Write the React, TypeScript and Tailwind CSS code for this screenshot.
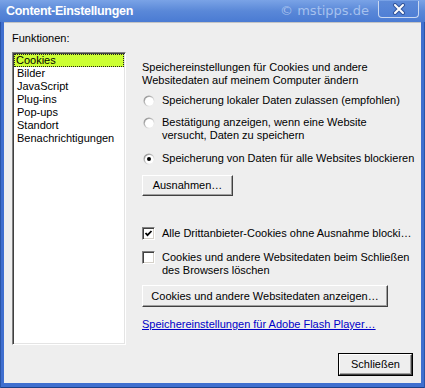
const raised =
  "border border-t-white border-l-white border-r-[#404040] border-b-[#404040] shadow-[inset_-1px_-1px_0_#a0a0a0] bg-[#eeeeee]";

function Radio({ checked }: { checked?: boolean }) {
  return (
    <svg width="12" height="12" viewBox="0 0 12 12" className="shrink-0">
      <defs>
        <linearGradient id="rg" x1="0" y1="0" x2="1" y2="1">
          <stop offset="0" stopColor="#808080" />
          <stop offset="0.5" stopColor="#c8c8c8" />
          <stop offset="1" stopColor="#ffffff" />
        </linearGradient>
      </defs>
      <circle cx="6" cy="6" r="5.5" fill="url(#rg)" />
      <circle cx="6.3" cy="6.3" r="4.4" fill="#ffffff" />
      {checked && <circle cx="6" cy="6" r="2" fill="#000000" />}
    </svg>
  );
}

function Check({ checked }: { checked?: boolean }) {
  return (
    <div className="w-[13px] h-[13px] shrink-0 bg-white border border-t-[#808080] border-l-[#808080] border-r-white border-b-white shadow-[inset_1px_1px_0_#404040,inset_-1px_-1px_0_#d4d0c8] flex items-center justify-center">
      {checked && (
        <svg width="9" height="9" viewBox="0 0 9 9">
          <path d="M1.5 4 L3.5 6.2 L7.5 2" fill="none" stroke="#000" strokeWidth="1.8" />
        </svg>
      )}
    </div>
  );
}

const items = ["Cookies", "Bilder", "JavaScript", "Plug-ins", "Pop-ups", "Standort", "Benachrichtigungen"];

export default function App() {
  return (
    <div className="w-[425px] h-[388px] flex flex-col bg-[#3f6fcf] shadow-[inset_1px_0_0_#2a55a8,inset_-1px_0_0_#2a55a8,inset_0_-1px_0_#1d3f86] font-['Liberation_Sans',Arial,sans-serif] text-[11px] leading-[13px] text-black">
      {/* Titelleiste */}
      <div className="h-[22px] shrink-0 flex items-center bg-gradient-to-b from-[#7aa3e6] via-[#5a88d8] to-[#4a7bd3]">
        <span className="pl-[6px] text-white font-bold text-[12.5px] tracking-[-0.3px]">Content-Einstellungen</span>
        <span className="ml-auto mr-[9px] font-['DejaVu_Sans',sans-serif] text-[13px] text-[#a6c1ee] pb-[1px]">© mstipps.de</span>
        <div className="self-start mt-[1px] mr-[6px] w-[41px] h-[17px] border border-t-0 border-[#c9d8f2] rounded-b-[4px] bg-gradient-to-b from-[#5d8ad8] to-[#4f7fd5] flex items-center justify-center">
          <svg width="14" height="12" viewBox="0 0 14 12">
            <path d="M3 2 L11 10 M11 2 L3 10" stroke="#34569c" strokeWidth="4" strokeLinecap="round" />
            <path d="M3 2 L11 10 M11 2 L3 10" stroke="#ffffff" strokeWidth="2" strokeLinecap="round" />
          </svg>
        </div>
      </div>

      {/* Inhalt */}
      <div className="flex-1 mx-[4px] mb-[5px] bg-[#eeeeee] flex flex-col shadow-[inset_0_1px_0_#c4c4c4]">
        <div className="flex">
          <div className="pl-[8px] pt-[10px] flex flex-col">
            <div className="h-[13px]">Funktionen:</div>
            <div className="mt-[7px] w-[114px] h-[293px] bg-white border border-t-[#808080] border-l-[#808080] border-r-white border-b-white shadow-[inset_1px_1px_0_#404040,inset_-1px_-1px_0_#e4e4e4] p-[1px] flex flex-col">
              {items.map((it, i) => (
                <div
                  key={it}
                  className={
                    i === 0
                      ? "h-[13px] pl-[2px] bg-[#ccff33] outline outline-1 outline-dotted outline-[#202020] -outline-offset-1"
                      : "h-[13px] pl-[3px]"
                  }
                >
                  {it}
                </div>
              ))}
            </div>
          </div>

          <div className="ml-[16px] pt-[39px] flex flex-col">
            <div>
              Speichereinstellungen für Cookies und andere
              <br />
              Websitedaten auf meinem Computer ändern
            </div>
            <div className="mt-[7px] flex items-center gap-[7px] pl-[1px]">
              <Radio />
              <span>Speicherung lokaler Daten zulassen (empfohlen)</span>
            </div>
            <div className="mt-[9px] flex items-start gap-[7px] pl-[1px]">
              <div className="pt-[1px]">
                <Radio />
              </div>
              <span>
                Bestätigung anzeigen, wenn eine Website
                <br />
                versucht, Daten zu speichern
              </span>
            </div>
            <div className="mt-[10px] flex items-center gap-[7px] pl-[1px]">
              <Radio checked />
              <span>Speicherung von Daten für alle Websites blockieren</span>
            </div>
            <button className={`${raised} mt-[10px] w-[91px] h-[21px] flex items-center justify-center`}>
              Ausnahmen…
            </button>

            <div className="mt-[31px] flex items-center gap-[7px]">
              <Check checked />
              <span>Alle Drittanbieter-Cookies ohne Ausnahme blocki…</span>
            </div>
            <div className="mt-[11px] flex items-start gap-[7px]">
              <Check />
              <span>
                Cookies und andere Websitedaten beim Schließen
                <br />
                des Browsers löschen
              </span>
            </div>
            <button className={`${raised} mt-[8px] w-[246px] h-[22px] flex items-center justify-center`}>
              Cookies und andere Websitedaten anzeigen…
            </button>
            <a href="#" className="mt-[11px] text-[#0000c8] underline">
              Speichereinstellungen für Adobe Flash Player…
            </a>
          </div>
        </div>

        <div className="mt-[8px] flex justify-end pr-[8px]">
          <button className="w-[75px] h-[23px] border border-black bg-[#eeeeee] p-0">
            <div className="w-full h-full border border-t-white border-l-white border-r-[#404040] border-b-[#404040] shadow-[inset_-1px_-1px_0_#a0a0a0] flex items-center justify-center">
              Schließen
            </div>
          </button>
        </div>
      </div>
    </div>
  );
}
